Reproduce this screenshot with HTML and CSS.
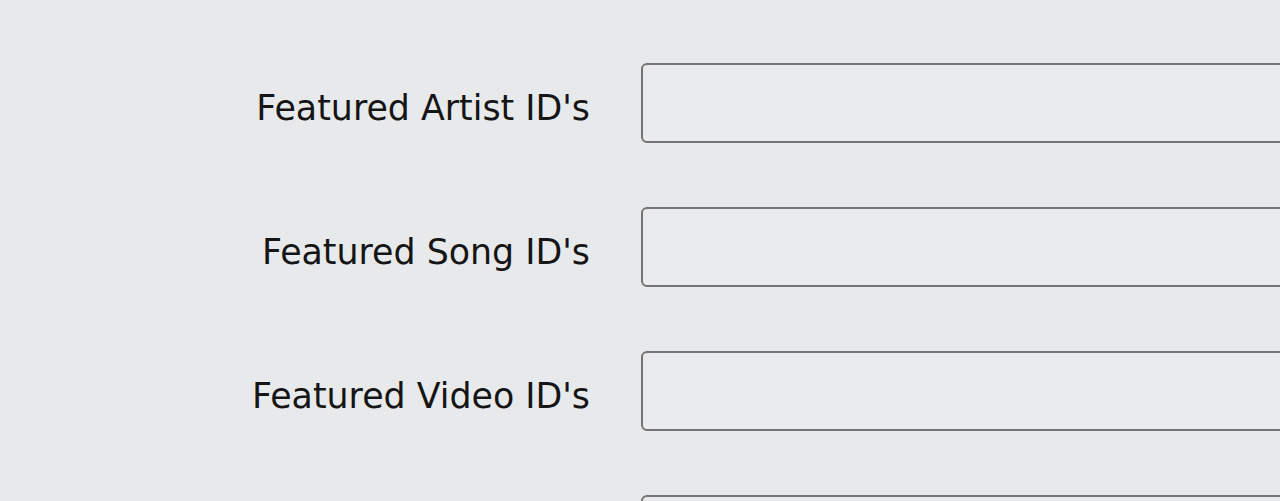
FILE: index.html
```html
<!DOCTYPE html>
<html>
<head>
  <title>Featured Content</title>
  <link rel="stylesheet" href="styles.css">
</head>
<body>
  <div class="form">
    <div class="form-row">
      <label for="artistIds">Featured Artist ID's</label>
      <input type="text" id="artistIds">
    </div>
    <div class="form-row">
      <label for="songIds">Featured Song ID's</label>
      <input type="text" id="songIds">
    </div>
    <div class="form-row">
      <label for="videoIds">Featured Video ID's</label>
      <input type="text" id="videoIds">
    </div>
    <div class="form-row">
      <label for="albumIds"></label>
      <input type="text" id="albumIds">
    </div>
  </div>
</body>
</html>
```

FILE: styles.css
```css
html, body {
  margin: 0;
  padding: 0;
  background-color: #e8e9ea;
  overflow: hidden;
  height: 501px;
}

body {
  font-family: "DejaVu Sans", Tahoma, sans-serif;
  color: #151515;
}

.form {
  padding-top: 63px;
  display: flex;
  flex-direction: column;
  gap: 64px;
}

.form-row {
  display: grid;
  grid-template-columns: 590px 800px;
  column-gap: 51px;
  align-items: center;
  height: 80px;
}

label {
  text-align: right;
  font-size: 34.8px;
  padding-top: 9px;
}

input[type="text"] {
  box-sizing: border-box;
  height: 80px;
  width: 800px;
  border: 2px solid #747474;
  border-radius: 6px;
  background-color: #e9eaeb;
}
```
